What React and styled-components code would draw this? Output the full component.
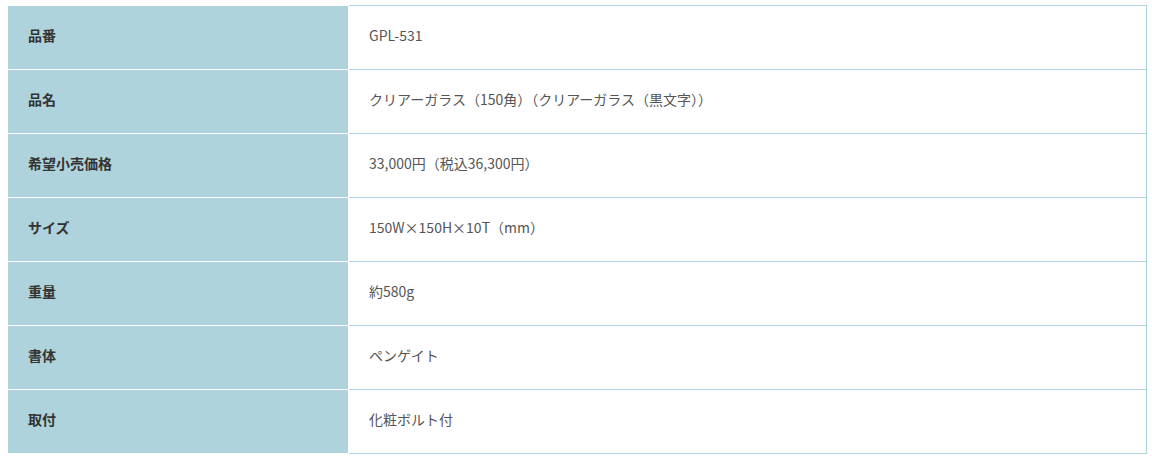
import styled, { createGlobalStyle } from "styled-components";

const GlobalStyle = createGlobalStyle`
  body {
    margin: 0;
    padding: 5px 6px 0 8px;
    background: #fff;
    font-family: "Noto Sans CJK JP", "Noto Sans", sans-serif;
  }
`;

const SpecTable = styled.table`
  width: 1139px;
  border-collapse: collapse;
  table-layout: fixed;
  font-size: 14px;
  line-height: 20px;
`;

const HeadCell = styled.th`
  width: 300px;
  height: 57px;
  padding: 0 20px 6px;
  background: #afd3dc;
  border: 1px solid #fff;
  border-left: none;
  text-align: left;
  font-weight: bold;
  color: #333;
`;

const ValueCell = styled.td`
  height: 57px;
  padding: 0 20px 6px;
  border: 1px solid #afd3dc;
  color: #555;
`;

const specs = [
  ["品番", "GPL-531"],
  ["品名", "クリアーガラス（150角）（クリアーガラス（黒文字））"],
  ["希望小売価格", "33,000円（税込36,300円）"],
  ["サイズ", "150W×150H×10T（mm）"],
  ["重量", "約580g"],
  ["書体", "ペンゲイト"],
  ["取付", "化粧ボルト付"],
];

export default function App() {
  return (
    <>
      <GlobalStyle />
      <SpecTable>
        <tbody>
          {specs.map(([label, value]) => (
            <tr key={label}>
              <HeadCell>{label}</HeadCell>
              <ValueCell>{value}</ValueCell>
            </tr>
          ))}
        </tbody>
      </SpecTable>
    </>
  );
}
